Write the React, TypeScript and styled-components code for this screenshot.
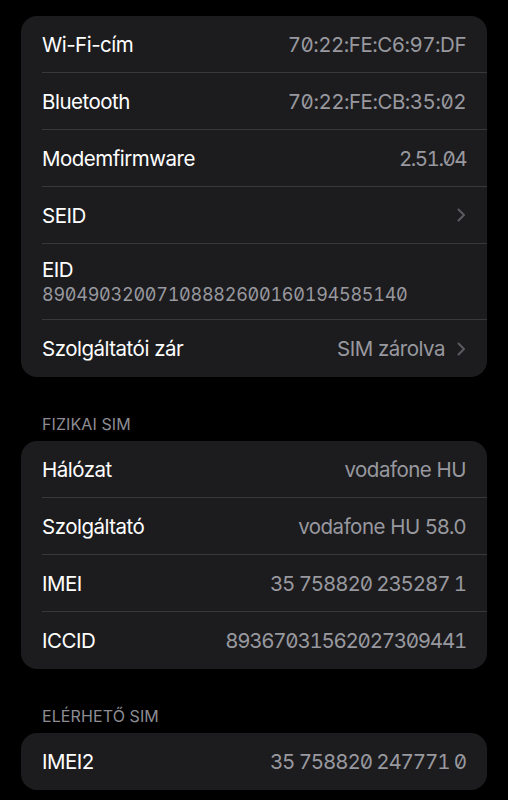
import React from "react";
import styled, { createGlobalStyle } from "styled-components";

const GlobalStyle = createGlobalStyle`
  html, body {
    margin: 0;
    padding: 0;
    background: #000;
  }
  body {
    font-family: Inter, "Noto Sans", "Liberation Sans", sans-serif;
    -webkit-font-smoothing: antialiased;
  }
`;

const Page = styled.div`
  width: 508px;
  min-height: 800px;
  box-sizing: border-box;
  padding: 16px 21px 0;
  background: #000;
`;

const Section = styled.div`
  background: #1c1c1e;
  border-radius: 16px;
  overflow: hidden;
`;

const SectionHeader = styled.div`
  margin: 37px 21px 7px;
  height: 20px;
  line-height: 20px;
  font-size: 16px;
  color: #8d8d93;
  letter-spacing: 0.1px;
`;

const Row = styled.div`
  padding-left: 21px;
`;

const RowBody = styled.div<{ $last?: boolean; $tall?: boolean }>`
  box-sizing: border-box;
  height: ${(p) => (p.$tall ? 76 : 57)}px;
  padding-right: 21px;
  padding-bottom: ${(p) => (p.$tall ? 2 : 0)}px;
  display: flex;
  flex-direction: ${(p) => (p.$tall ? "column" : "row")};
  align-items: ${(p) => (p.$tall ? "flex-start" : "center")};
  justify-content: ${(p) => (p.$tall ? "center" : "space-between")};
  border-bottom: ${(p) => (p.$last ? "none" : "1px solid #38383b")};
`;

const Label = styled.span`
  font-size: 20.5px;
  letter-spacing: -0.5px;
  color: #fff;
`;

const Trail = styled.div`
  display: flex;
  align-items: center;
  gap: 12px;
`;

const Value = styled.span<{ $digits?: boolean; $spacing?: number }>`
  font-size: 20.5px;
  letter-spacing: ${(p) => p.$spacing ?? -0.5}px;
  color: #98989f;
  font-feature-settings: ${(p) => (p.$digits ? '"tnum" 1, "zero" 1' : "normal")};
`;

const SubValue = styled.span`
  margin-top: 2px;
  font-size: 18px;
  letter-spacing: -0.25px;
  color: #98989f;
  font-feature-settings: "tnum" 1, "zero" 1;
`;

const Chevron = styled.svg`
  width: 9px;
  height: 14px;
  flex: none;
`;

function Arrow() {
  return (
    <Chevron viewBox="0 0 9 14">
      <path
        d="M1.5 1.5 L7 7 L1.5 12.5"
        fill="none"
        stroke="#5b5b60"
        strokeWidth="2"
        strokeLinecap="round"
        strokeLinejoin="round"
      />
    </Chevron>
  );
}

type Item = {
  label: string;
  value?: string;
  digits?: boolean;
  spacing?: number;
  chevron?: boolean;
  sub?: string;
};

const general: Item[] = [
  { label: "Wi-Fi-cím", value: "70:22:FE:C6:97:DF", digits: true },
  { label: "Bluetooth", value: "70:22:FE:CB:35:02", digits: true },
  { label: "Modemfirmware", value: "2.51.04", digits: true, spacing: -1.5 },
  { label: "SEID", chevron: true },
  { label: "EID", sub: "89049032007108882600160194585140" },
  { label: "Szolgáltatói zár", value: "SIM zárolva", chevron: true },
];

const physical: Item[] = [
  { label: "Hálózat", value: "vodafone HU" },
  { label: "Szolgáltató", value: "vodafone HU 58.0" },
  { label: "IMEI", value: "35 758820 235287 1", digits: true, spacing: -1.1 },
  { label: "ICCID", value: "89367031562027309441", digits: true, spacing: -1.25 },
];

const available: Item[] = [
  { label: "IMEI2", value: "35 758820 247771 0", digits: true, spacing: -1.1 },
];

function List({ items }: { items: Item[] }) {
  return (
    <Section>
      {items.map((it, i) => {
        const last = i === items.length - 1;
        if (it.sub) {
          return (
            <Row key={it.label}>
              <RowBody $tall $last={last}>
                <Label>{it.label}</Label>
                <SubValue>{it.sub}</SubValue>
              </RowBody>
            </Row>
          );
        }
        return (
          <Row key={it.label}>
            <RowBody $last={last}>
              <Label>{it.label}</Label>
              <Trail>
                {it.value && (
                  <Value $digits={it.digits} $spacing={it.spacing}>
                    {it.value}
                  </Value>
                )}
                {it.chevron && <Arrow />}
              </Trail>
            </RowBody>
          </Row>
        );
      })}
    </Section>
  );
}

export default function App() {
  return (
    <Page>
      <GlobalStyle />
      <List items={general} />
      <SectionHeader>FIZIKAI SIM</SectionHeader>
      <List items={physical} />
      <SectionHeader>ELÉRHETŐ SIM</SectionHeader>
      <List items={available} />
    </Page>
  );
}
